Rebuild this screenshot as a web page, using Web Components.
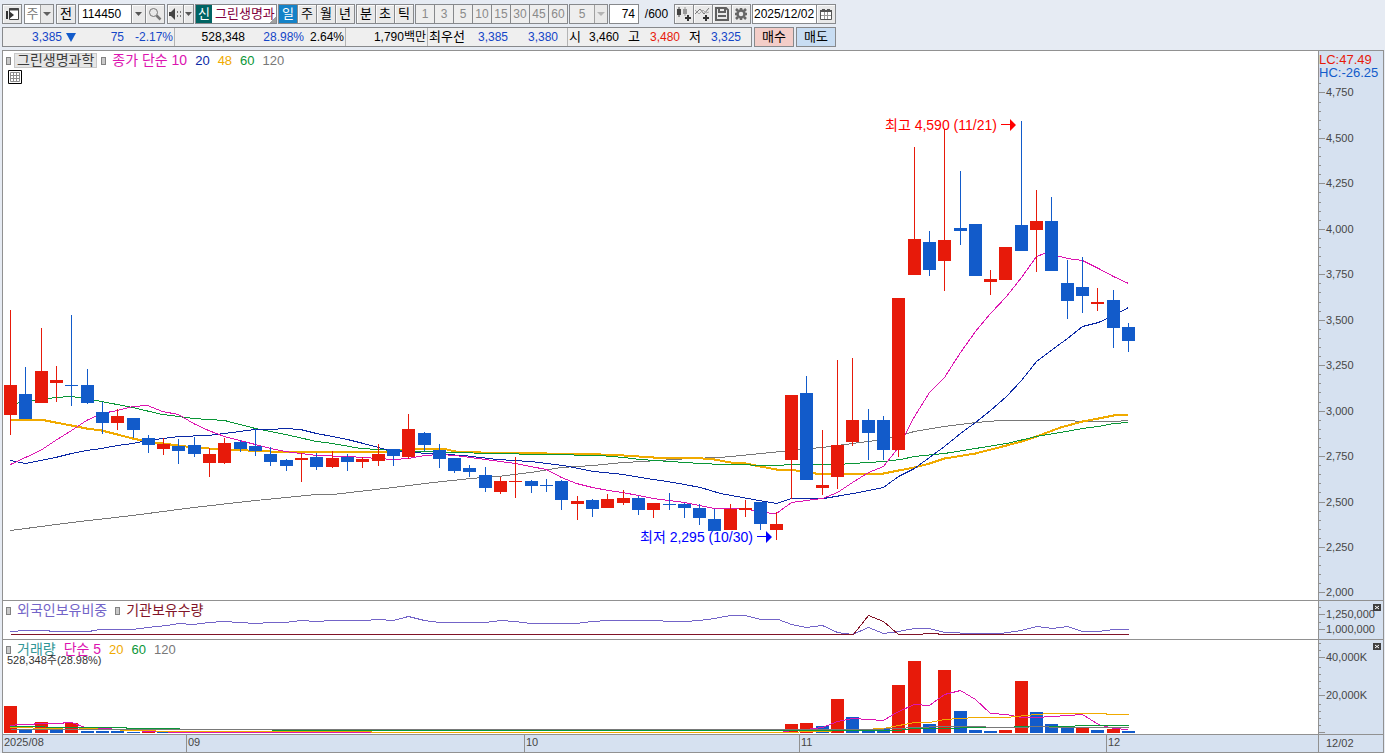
<!DOCTYPE html>
<html lang="ko">
<head>
<meta charset="utf-8">
<title>그린생명과학 - 종합차트</title>
<style>
	body {
		margin: 0;
		background: #e6ebf3;
		color: #000;
		font: 12px/16px "Liberation Sans", "Noto Sans CJK KR", sans-serif;
	}
</style>
</head>
<body>
<stock-app></stock-app>

<script>
const RED = '#e71a0a';
const BLUE = '#125bca';
const PINK = '#dc14b0';
const NAVY = '#0a28a5';
const GOLD = '#f0aa00';
const GREEN = '#0a9637';
const GRAY = '#787878';
const LINE = '#919191';

// color, high, low, body top, body bottom
const candles = [
	['r', 310, 435, 385, 415], ['b', 367, 419, 394, 419], ['r', 328, 403, 371, 403],
	['r', 366, 402, 380, 383], ['b', 315, 406, 385, 386], ['b', 369, 404, 385, 403],
	['b', 402, 434, 412, 423], ['r', 409, 430, 416, 423], ['b', 418, 438, 418, 430],
	['b', 435, 453, 438, 445], ['r', 438, 455, 444, 449], ['b', 439, 464, 446, 451],
	['b', 437, 457, 445, 454], ['r', 448, 477, 454, 463], ['r', 438, 464, 443, 463],
	['b', 440, 452, 442, 449], ['b', 429, 456, 446, 451], ['b', 447, 466, 454, 462],
	['b', 459, 471, 460, 466], ['r', 453, 482, 458, 460], ['b', 453, 470, 457, 467],
	['r', 451, 468, 458, 467], ['b', 454, 471, 457, 462], ['r', 457, 468, 459, 462],
	['r', 444, 466, 454, 461], ['b', 449, 466, 449, 456], ['r', 414, 459, 429, 457],
	['b', 432, 451, 433, 445], ['b', 444, 468, 450, 459], ['b', 458, 473, 458, 471],
	['b', 465, 477, 468, 472], ['b', 467, 492, 475, 488], ['r', 477, 494, 481, 492],
	['r', 457, 498, 481, 482], ['b', 480, 493, 481, 486], ['b', 479, 492, 485, 486],
	['b', 480, 510, 481, 500], ['r', 496, 520, 501, 504], ['b', 499, 517, 500, 509],
	['r', 494, 508, 499, 508], ['r', 490, 505, 498, 503], ['b', 496, 515, 498, 510],
	['r', 503, 518, 503, 510], ['b', 493, 510, 504, 505], ['b', 503, 518, 504, 508],
	['b', 504, 525, 508, 518], ['b', 509, 531, 519, 531], ['r', 504, 530, 509, 530],
	['r', 500, 517, 508, 510], ['b', 502, 530, 502, 524], ['r', 512, 540, 524, 530],
	['r', 395, 499, 395, 460], ['b', 376, 480, 393, 480], ['r', 430, 495, 485, 488],
	['r', 360, 489, 445, 477], ['r', 358, 446, 420, 442], ['b', 409, 460, 420, 433],
	['b', 416, 460, 420, 450], ['r', 298, 457, 298, 450], ['r', 147, 275, 239, 275],
	['b', 231, 276, 242, 270], ['r', 129, 291, 240, 261], ['b', 171, 245, 228, 231],
	['b', 224, 276, 224, 276], ['r', 270, 295, 279, 282], ['r', 247, 280, 247, 280],
	['b', 121, 251, 225, 251], ['r', 190, 272, 221, 230], ['b', 197, 271, 221, 271],
	['b', 260, 319, 283, 301], ['b', 257, 313, 287, 296], ['r', 288, 311, 302, 304],
	['b', 290, 348, 300, 328], ['b', 323, 352, 327, 341]
];

// index: [color, top]
const volumes = {
	0: ['r', 706], 1: ['b', 730], 2: ['r', 722], 3: ['b', 730], 4: ['r', 723], 5: ['b', 731],
	6: ['b', 731], 7: ['b', 731], 8: ['b', 732], 9: ['r', 731], 10: ['b', 732], 16: ['r', 731],
	51: ['r', 724], 52: ['r', 723], 53: ['b', 726], 54: ['r', 699], 55: ['b', 717],
	56: ['b', 729], 57: ['b', 728], 58: ['r', 685], 59: ['r', 661], 60: ['b', 724],
	61: ['r', 670], 62: ['b', 711], 63: ['b', 730], 64: ['b', 731], 65: ['r', 730],
	66: ['r', 681], 67: ['b', 712], 68: ['b', 724], 69: ['b', 727], 70: ['r', 728],
	71: ['b', 730], 72: ['r', 729], 73: ['b', 731]
};

const priceLines = [
	[GRAY, 1, '10,530 71,522 132,515 193,507 255,500 316,494 332,494 393,487 424,483 470,478 497,476 530,472 561,467 592,465 623,462 642,461 690,458 720,457 791,450 830,446 852,443 883,439 914,431 944,426 975,422 1000,420 1067,420 1082,421 1113,421 1128,420'],
	[GOLD, 2, '10,419 40,419 55,422 71,425 86,428 101,430 117,434 132,438 147,441 162,443 178,445 193,447 224,449 270,451 390,451 408,449 424,448 442,448 455,451 480,452 515,452 546,453 600,454 623,455 653,457 690,457 714,459 730,462 745,463 760,466 776,469 791,469 800,471 815,473 883,473 898,470 914,467 929,463 944,458 975,453 1006,445 1021,441 1036,436 1060,427 1082,421 1098,418 1113,415 1128,414'],
	[GREEN, 1, '10,404 25,401 40,399 55,397 71,396 86,398 101,401 132,407 162,414 178,416 193,418 224,420 255,428 285,434 316,441 332,443 360,448 378,449 393,450 430,451 455,452 490,453 546,454 600,455 623,457 640,459 670,461 700,463 723,464 776,465 791,464 837,464 852,463 883,461 900,459 914,456 944,453 975,448 1006,443 1036,436 1060,432 1082,428 1098,426 1113,423 1128,422'],
	[NAVY, 1, '10,460 25,463 40,460 55,457 71,453 86,450 101,448 117,445 132,443 147,440 178,436 208,435 224,433 239,431 255,429 270,429 285,428 300,429 316,433 332,436 347,439 363,443 378,447 393,451 430,453 463,455 497,459 530,461 563,465 593,471 623,474 640,477 673,482 700,487 720,493 753,499 776,503 791,498 823,498 853,493 883,487 898,476 914,468 929,457 944,446 960,433 975,422 990,410 1006,396 1021,380 1036,361 1052,349 1067,338 1082,326 1098,322 1113,315 1128,307'],
	[PINK, 1, '10,464 25,457 40,450 55,440 71,430 86,420 101,413 117,410 132,406 147,405 162,411 178,414 193,423 208,430 224,436 239,440 255,444 270,448 285,451 300,453 316,455 347,456 363,457 393,459 408,458 424,455 439,454 455,455 470,457 485,459 500,461 515,463 530,466 546,469 561,477 576,483 592,487 608,490 622,492 638,495 653,498 668,500 684,502 699,505 714,508 745,508 760,512 776,513 791,502 806,500 822,498 837,492 852,482 868,472 883,466 898,447 914,416 929,392 944,377 960,352 975,331 990,313 1006,296 1021,277 1036,256 1044,253 1052,254 1067,258 1082,260 1098,268 1113,276 1128,283']
];

const holdLines = [
	['#7364c8', 1, '10,631 25,630 48,630 50,631 88,631 100,629 132,629 147,627 167,625 178,623 193,624 208,622 224,621 239,622 255,623 270,622 285,622 300,620 316,621 332,620 363,620 378,619 393,620 408,616 424,620 439,622 485,622 500,620 515,621 530,623 576,623 592,621 608,620 640,620 684,621 699,620 714,618 730,615 745,615 760,619 778,619 791,624 806,627 822,625 837,632 852,634 868,627 883,633 898,631 914,628 929,628 944,632 975,633 1000,633 1021,630 1036,626 1052,628 1067,626 1082,631 1098,631 1113,629 1128,629'],
	['#821428', 1, '10,634 853,634 868,615 883,621 898,634 920,634 925,633 936,633 940,634 1128,634']
];

const volumeLines = [
	[PINK, 1, '10,725 20,724 33,724 35,723 62,723 64,722 71,722 85,727 105,728 117,729 135,730 147,731 163,731 172,732 780,732 791,730 806,729 822,727 837,721 852,718 868,719 883,720 898,711 914,704 929,705 944,694 960,690 975,699 990,713 1006,714 1021,717 1036,717 1067,715 1082,714 1098,724 1113,728 1128,729'],
	[GOLD, 1, '10,727 55,728 71,727 86,728 130,730 180,731 370,731 372,732 775,732 822,731 883,728 914,722 929,722 944,719 975,717 1006,717 1036,714 1050,713 1105,713 1107,714 1128,714'],
	[GREEN, 1, '10,726 78,727 125,727 127,728 232,729 310,730 898,730 914,728 944,728 975,727 1006,727 1021,726 1070,726 1080,725 1128,725'],
	[GRAY, 1, '10,729 870,729 898,728 914,727 944,726 980,726 990,727 1021,727 1036,726 1060,727 1128,727']
];

const colorOf = (c) => c === 'r' ? RED : BLUE;
const xOf = (i) => 10 + Math.round(i * 1118 / 73);

function drawLines(list) {
	return list.map(([color, w, pts]) =>
		`<polyline points="${pts}" transform="translate(.5 .5)" fill="none" stroke="${color}" stroke-width="${w}"/>`
	).join('');
}

function drawCandles() {
	return candles.map(([c, high, low, top, bottom], i) => {
		const x = xOf(i);
		return `<g fill="${colorOf(c)}"><rect x="${x}" y="${high}" width="1" height="${low - high}"/>` +
			`<rect x="${x - 6}" y="${top}" width="13" height="${bottom - top}"/></g>`;
	}).join('');
}

function drawVolumes() {
	return Object.keys(volumes).map((i) => {
		const [c, top] = volumes[i];
		return `<rect x="${xOf(i) - 6}" y="${top}" width="13" height="${733 - top}" fill="${colorOf(c)}"/>`;
	}).join('');
}

const drawings = {
	price: {
		top: 51,
		plot: () => drawLines(priceLines) + drawCandles(),
		major: Array.from({ length: 12 }, (_, k) => [592 - Math.floor(k * 500 / 11), (2000 + k * 250).toLocaleString('en-US')]),
		minor: Array.from({ length: 57 }, (_, k) => 592 - Math.floor(k * 100 / 11))
	},
	hold: {
		top: 601,
		plot: () => drawLines(holdLines),
		major: [[614, '1,250,000'], [629, '1,000,000']],
		minor: [607, 622]
	},
	volume: {
		top: 640,
		plot: () => drawVolumes() + drawLines(volumeLines),
		major: [[657, '40,000K'], [695, '20,000K'], [732, '']],
		minor: [643, 650, 667, 674, 681, 688, 704, 711, 718, 725]
	}
};

class BaseElement extends HTMLElement {
	constructor() {
		super();
		this.attachShadow({ mode: 'open' });
	}

	connectedCallback() {
		const template = document.createElement('template');
		template.innerHTML = `<style>${this.getStyle()}</style>${this.getTemplate()}`;
		this.shadowRoot.appendChild(template.content.cloneNode(true));
	}
}

class ToolButton extends BaseElement {
	getTemplate() {
		const off = this.hasAttribute('off') ? 'disabled' : '';
		const label = this.getAttribute('label');
		return `<button type="button" ${off} ${label ? `aria-label="${label}"` : ''}><slot></slot></button>`;
	}

	getStyle() {
		return `
		:host { display: block; width: 20px; height: 20px; flex: none; }
		:host([narrow]) { width: 11px; }
		:host([arrow]) { width: 15px; }
		:host([wide]) { width: 40px; height: 20px; }
		button {
			box-sizing: border-box;
			display: flex;
			align-items: center;
			justify-content: center;
			width: 100%;
			height: 100%;
			padding: 0;
			border: 1px solid #87898c;
			background: #e9e9e9;
			box-shadow: inset 1px 1px #fafafa;
			color: #000;
			font: 13px/16px "Liberation Sans", "Noto Sans CJK KR", sans-serif;
		}
		button:disabled { color: #8a8a8a; background: #eeeeee; box-shadow: none; font-size: 12px; }
		:host([on]) button { background: #1482c8; color: #fff; box-shadow: none; }
		:host([buy]) button { background: #f3cdc8; box-shadow: none; }
		:host([sell]) button { background: #c8ddf3; box-shadow: none; }
		::slotted(svg) { flex: none; }
		`;
	}
}

class DropDown extends BaseElement {
	getTemplate() {
		const off = this.hasAttribute('off') ? 'disabled' : '';
		return `
		<select aria-label="${this.getAttribute('label')}" ${off}><option>${this.getAttribute('value')}</option></select>
		<svg width="13" height="18" aria-hidden="true"><path d="M0 0h13v18H0z" fill="#e9e9e9"/><path d="M.5 0v18" stroke="#a0a0a0"/><path d="M3 7h8l-4 4z"/></svg>
		`;
	}

	getStyle() {
		return `
		:host { box-sizing: border-box; display: grid; grid-template-columns: 1fr 13px; height: 20px; border: 1px solid #87898c; background: #fff; flex: none; color: #777; }
		select {
			grid-area: 1 / 1 / 2 / 3;
			appearance: none;
			border: 0;
			margin: 0;
			padding: 0 13px 0 0;
			background: transparent;
			color: inherit;
			font: inherit;
			text-align: center;
			text-align-last: center;
			opacity: 1;
		}
		svg { grid-area: 1 / 2; pointer-events: none; fill: #606060; }
		:host([off]) { background: #eeeeee; color: #8a8a8a; }
		:host([off]) svg { fill: #b4b4b4; }
		`;
	}
}

class ToolBar extends BaseElement {
	getTemplate() {
		const minutes = [1, 3, 5, 10, 15, 30, 45, 60].map((m) => `<tool-button off>${m}</tool-button>`).join('');
		const arrow = '<svg width="7" height="4"><path d="M0 0h7L3.5 4z" fill="#555"/></svg>';
		return `
		<div class="start">
			<tool-button label="창 열기"><svg width="14" height="14"><path d="M4.500 1.500h9v11h-9z" fill="#fff" stroke="#444"/><path d="M4 2.500h10" stroke="#444" stroke-width="2"/><path d="M4 4l5 4-5 4zM1 4h2v8H1z" fill="#333"/></svg></tool-button>
			<drop-down class="type" label="구분" value="주"></drop-down>
			<tool-button>전</tool-button>
			<div class="group">
				<div class="box code"><input aria-label="종목코드" value="114450"><tool-button arrow label="종목 목록">${arrow}</tool-button></div>
				<tool-button label="검색"><svg width="14" height="14" fill="none" stroke="#777"><circle cx="5.500" cy="5.500" r="4"/><path d="M8.500 8.500l4 4" stroke-width="2.500"/></svg></tool-button>
			</div>
			<div class="group"><tool-button class="sound" label="소리"><svg width="13" height="12"><path d="M0 4h2l4-4v12L2 8H0z" fill="#444"/><path d="M8.500 3v6M11.500 3v6" stroke="#777" stroke-dasharray="2 2"/></svg></tool-button><tool-button narrow label="소리 설정">${arrow}</tool-button></div>
		</div>
		<div class="box name"><b>신</b><span>그린생명과</span></div>
		<div class="group"><tool-button on>일</tool-button><tool-button>주</tool-button><tool-button>월</tool-button><tool-button>년</tool-button></div>
		<div class="group"><tool-button>분</tool-button><tool-button>초</tool-button><tool-button>틱</tool-button></div>
		<div class="group">${minutes}</div>
		<drop-down class="unit" label="분 단위" value="5" off></drop-down>
		<div class="box count"><input id="count" aria-label="조회 개수" value="74"></div>
		<label for="count">/600</label>
		<div class="group">
			<tool-button label="캔들 추가"><svg width="16" height="14"><path d="M1 2h4v6H1zM2.500 0h1v10h-1z" fill="#444"/><path d="M7 2h4v5H7zM8.500 0h1v9h-1z" fill="#999"/><path d="M9 11h6M12 8v6" stroke="#333" stroke-width="2"/></svg></tool-button>
			<tool-button label="지표 추가"><svg width="16" height="14" fill="none"><path d="M0 7l5-5 4 5 5-6" stroke="#777"/><path d="M0 3l4 4 4-4 3 3 3-1" stroke="#aaa"/><path d="M8 11h6M11 8v6" stroke="#333" stroke-width="2"/></svg></tool-button>
			<tool-button label="저장"><svg width="14" height="14" fill="none" stroke="#606060" stroke-width="2"><path d="M1 1h10l2 2v10H1zM4 1v4h6V1M3 9h8"/></svg></tool-button>
			<tool-button label="설정"><svg width="14" height="14" fill="none" stroke="#666"><circle cx="7" cy="7" r="3.500" stroke-width="2.500"/><path d="M7 1v2M7 11v2M1 7h2M11 7h2M2 2l2 2M10 10l2 2M12 2l-2 2M4 10l-2 2" stroke-width="2.500"/></svg></tool-button>
		</div>
		<div class="box date"><input aria-label="날짜" value="2025/12/02"><tool-button label="달력"><svg width="12" height="12"><path d="M.5 2.500h11v9H.5z" fill="#fff" stroke="#555"/><path d="M0 2h12v2H0zM2 1h3v2H2zM7 1h3v2H7z" fill="#555"/><path d="M1 7.500h10M4.500 4v7M7.500 4v7" stroke="#999"/></svg></tool-button></div>
		`;
	}

	getStyle() {
		return `
		:host { display: flex; align-items: center; gap: 1px; padding: 4px 2px 3px; }
		.start { display: flex; gap: 2px; flex: none; }
		.group { display: flex; flex: none; }
		.group > * + * { margin-left: -1px; }
		.group .sound { width: 17px; }
		.box { box-sizing: border-box; display: flex; height: 20px; border: 1px solid #87898c; background: #fff; flex: none; overflow: hidden; }
		.box tool-button { margin: -1px -1px 0 0; }
		input {
			flex: 1;
			min-width: 0;
			padding: 0 3px;
			border: 0;
			background: transparent;
			font: inherit;
		}
		.type { width: 30px; font-size: 13px; }
		.unit { width: 39px; }
		.code { width: 68px; }
		.name {
			width: 82px;
			background: linear-gradient(135deg, transparent 50%, #a0a0a0 50%) right bottom / 6px 6px no-repeat #fff;
			color: #82003c;
			font-size: 13px;
			line-height: 18px;
			white-space: nowrap;
		}
		.name b { width: 16px; margin-right: 3px; background: #006464; color: #fff; font-weight: 400; text-align: center; flex: none; }
		.count { width: 30px; }
		.count input { text-align: right; }
		.date { width: 84px; }
		.date input { padding: 0 1px; }
		label { width: 33px; text-align: center; }
		`;
	}
}

class QuoteBar extends BaseElement {
	getTemplate() {
		return `
		<div class="quotes">
			<p class="down"><span style="width:58px">3,385</span><svg width="10" height="9"><path d="M0 0h10L5 9z" fill="#125bca"/></svg><span style="width:48px">75</span><span style="width:49px">-2.17%</span></p>
			<p><span style="width:69px">528,348</span><span class="down" style="width:59px">28.98%</span><span style="width:40px">2.64%</span></p>
			<p><span style="width:79px">1,790백만</span></p>
			<p><span class="ko" style="width:36px">최우선</span><span class="down" style="width:43px">3,385</span><span class="down" style="width:50px">3,380</span></p>
			<p><span class="ko" style="width:12px">시</span><span style="width:38px">3,460</span><span class="ko" style="width:21px">고</span><span class="up" style="width:40px">3,480</span><span class="ko" style="width:21px">저</span><span class="down" style="width:40px">3,325</span></p>
		</div>
		<tool-button wide buy>매수</tool-button>
		<tool-button wide sell>매도</tool-button>
		`;
	}

	getStyle() {
		return `
		:host { display: flex; gap: 2px; padding: 0 2px 3px; }
		.quotes {
			box-sizing: border-box;
			display: grid;
			grid-template-columns: 172px 171px 82px 140px 183px;
			height: 20px;
			border: 1px solid #87898c;
			background: #efefef;
		}
		p { display: flex; align-items: center; margin: 0; padding-left: 1px; border-right: 1px solid #b4b4b4; text-align: right; white-space: nowrap; }
		p:last-child { border: 0; }
		p span { flex: none; }
		svg { margin-left: 4px; }
		.ko { font-size: 13px; }
		.down { color: #1446c8; }
		.up { color: #e71a0a; }
		`;
	}
}

class ChartPanel extends BaseElement {
	getTemplate() {
		const { top, plot, major, minor } = drawings[this.getAttribute('kind')];
		const ticks = major.map(([y, text]) =>
			`<path d="M0 ${y}h6v1H0z" fill="#919191"/><text x="7" y="${y + 4}">${text}</text>`).join('') +
			minor.map((y) => `<path d="M0 ${y}h2v1H0z" fill="#919191"/>`).join('');
		return `
		<div class="plot">
			<svg><g transform="translate(-3 -${top})">${plot()}</g></svg>
			<div class="legend"><slot></slot></div>
			<slot name="note"></slot>
		</div>
		<div class="axis">
			<svg><g transform="translate(0 -${top})">${ticks}</g></svg>
			<slot name="axis"></slot>
			${this.hasAttribute('closable') ? '<button type="button" aria-label="닫기"><svg width="8" height="7"><path d="M2 2l4 3M6 2l-4 3" stroke="#fff"/></svg></button>' : ''}
		</div>
		`;
	}

	getStyle() {
		return `
		:host { display: flex; border-bottom: 1px solid ${LINE}; }
		:host([kind="price"]) { height: 549px; }
		:host([kind="hold"]) { height: 38px; }
		:host([kind="volume"]) { height: 94px; }
		.plot { position: relative; flex: 1; background: #fff; overflow: hidden; }
		.plot > svg, .axis > svg { display: block; width: 100%; height: 100%; shape-rendering: crispEdges; }
		.axis { position: relative; width: 64px; border-left: 1px solid ${LINE}; background: #d6e1f0; }
		text { font-size: 11px; fill: #464646; }
		.legend { position: absolute; top: 1px; left: 3px; }
		button { position: absolute; top: 3px; right: 2px; width: 8px; height: 7px; padding: 0; border: 0; background: #404040; }
		button svg { display: block; }
		`;
	}
}

class LegendRow extends BaseElement {
	getTemplate() {
		return '<slot></slot>';
	}

	getStyle() {
		return `
		:host { display: flex; align-items: center; gap: 8px; height: 17px; font-size: 13px; line-height: 15px; white-space: nowrap; }
		::slotted(i) { box-sizing: border-box; width: 5px; height: 8px; margin-right: -2px; border: 1px solid #828282; background: #c8c8c8; }
		::slotted(.ko) { font-size: 14px; }
		::slotted(.name) { margin: 0 -4px 0 -3px; padding: 0 2px; border: 1px solid #c8c8c8; background: #e6e6e6; color: #3c3c3c; line-height: 13px; }
		`;
	}
}

class PriceNote extends BaseElement {
	getTemplate() {
		return '<slot></slot><svg width="15" height="12"><path d="M0 5h9V0l6 6-6 6V6H0z" fill="currentColor"/></svg>';
	}

	getStyle() {
		return `
		:host { position: absolute; display: flex; align-items: center; gap: 4px; font-size: 14px; line-height: 16px; white-space: nowrap; }
		:host([high]) { left: 882px; top: 66px; color: #ff0000; }
		:host([low]) { left: 637px; top: 478px; color: #0000ff; }
		`;
	}
}

class TimeAxis extends BaseElement {
	getTemplate() {
		return `
		<span style="width:183px">2025/08</span>
		<span style="width:337px">09</span>
		<span style="width:274px">10</span>
		<span style="width:306px">11</span>
		<span class="rest">12</span>
		<span class="last">12/02</span>
		`;
	}

	getStyle() {
		return `
		:host { display: flex; height: 17px; background: #d6e1f0; color: #464646; font-size: 11px; line-height: 15px; }
		span { padding-left: 1px; box-sizing: border-box; }
		span + span { border-left: 1px solid ${LINE}; box-sizing: content-box; padding-left: 1px; margin-right: -1px; }
		.rest { flex: 1; margin-right: 0; }
		.last { width: 57px; padding-left: 7px; margin-right: 0; line-height: 17px; }
		`;
	}
}

class StockApp extends BaseElement {
	getTemplate() {
		return `
		<tool-bar></tool-bar>
		<quote-bar></quote-bar>
		<main>
			<chart-panel kind="price">
				<legend-row><i></i><span class="ko name">그린생명과학</span><i></i><span class="ko" style="color:${PINK}">종가 단순 10</span><span style="color:${NAVY}">20</span><span style="color:${GOLD}">48</span><span style="color:${GREEN}">60</span><span style="color:${GRAY}">120</span></legend-row>
				<svg class="grid" width="14" height="14"><path d="M.5 .5h13v13H.5z" fill="#fff" stroke="#000"/><path d="M2.500 2.500h9v9h-9zM2 5.500h10M2 8.500h10M5.500 2v10M8.500 2v10" fill="none" stroke="#8c8c8c"/></svg>
				<price-note slot="note" high>최고 4,590 (11/21)</price-note>
				<price-note slot="note" low>최저 2,295 (10/30)</price-note>
				<div slot="axis" class="rate"><span style="color:#e71a0a">LC:47.49</span><span style="color:#125bca">HC:-26.25</span></div>
			</chart-panel>
			<chart-panel kind="hold" closable>
				<legend-row style="color:#7364c8"><i></i><span class="ko">외국인보유비중</span><i></i><span class="ko" style="color:#821428">기관보유수량</span></legend-row>
			</chart-panel>
			<chart-panel kind="volume" closable>
				<legend-row><i></i><span class="ko" style="color:#329696">거래량</span><span class="ko" style="color:${PINK}">단순 5</span><span style="color:${GOLD}">20</span><span style="color:${GREEN}">60</span><span style="color:${GRAY}">120</span></legend-row>
				<div class="amount">528,348주(28.98%)</div>
			</chart-panel>
			<time-axis></time-axis>
		</main>
		`;
	}

	getStyle() {
		return `
		:host { display: block; }
		main { margin: 0 1px 0 2px; border: 1px solid ${LINE}; }
		.grid { display: block; margin: 1px 0 0 2px; }
		.rate { position: absolute; top: 2px; left: 0; display: grid; font-size: 13px; line-height: 13px; }
		.amount { margin: -4px 0 0 1px; font-size: 11px; line-height: 12px; color: #323232; }
		`;
	}
}

customElements.define('tool-button', ToolButton);
customElements.define('drop-down', DropDown);
customElements.define('tool-bar', ToolBar);
customElements.define('quote-bar', QuoteBar);
customElements.define('legend-row', LegendRow);
customElements.define('price-note', PriceNote);
customElements.define('chart-panel', ChartPanel);
customElements.define('time-axis', TimeAxis);
customElements.define('stock-app', StockApp);
</script>
</body>
</html>
